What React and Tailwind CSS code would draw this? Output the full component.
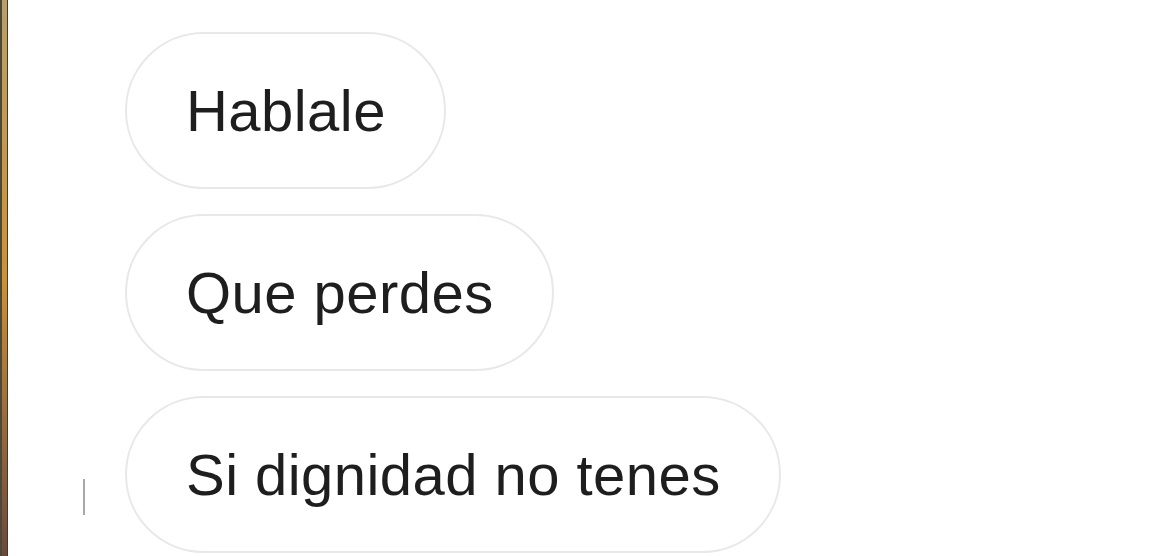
export default function App() {
  const messages = ['Hablale', 'Que perdes', 'Si dignidad no tenes'];

  return (
    <div className="relative flex h-[556px] w-[1169px] overflow-hidden bg-white font-['Liberation_Sans',Arial,sans-serif]">
      {/* left edge strip from the cropped screenshot */}
      <div className="flex h-full w-[8px] shrink-0">
        <div className="h-full w-[2px] bg-[#4a4a3c]" />
        <div className="h-full w-[5px] bg-gradient-to-b from-[#b8a06a] via-[#c9923c] to-[#6b4a3a]" />
        <div className="h-full w-[1px] bg-[#3a3a34]" />
      </div>

      <div className="flex flex-col gap-[25px] pl-[117px] pt-[32px]">
        {messages.map((text) => (
          <div
            key={text}
            className="flex h-[157px] w-fit items-center rounded-full border-2 border-[#e8e8e8] pl-[59px] pr-[58px] text-[58px] leading-none tracking-[0.45px] text-[#1e1e1e]"
          >
            {text}
          </div>
        ))}
      </div>

      {/* text cursor */}
      <div className="absolute left-[83px] top-[479px] h-[36px] w-[2px] bg-[#a8a8a8]" />
    </div>
  );
}
